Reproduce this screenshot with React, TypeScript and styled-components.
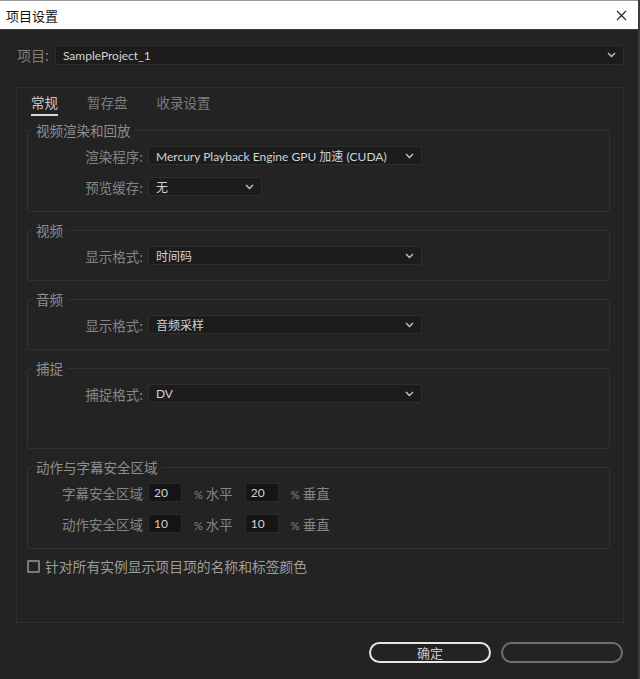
import styled, { createGlobalStyle } from 'styled-components';

const GlobalStyle = createGlobalStyle`
    html, body {
        margin: 0;
        padding: 0;
        background: #232323;
    }
    body {
        font-family: 'Noto Sans', 'Noto Sans CJK SC', sans-serif;
    }
`;

const CJK = `'Noto Sans CJK SC', 'Noto Sans', sans-serif`;
const LATIN = `Lato, 'Noto Sans CJK SC', sans-serif`;

interface Group {
    title: string;
    rows: { label: string; value: string; width: number }[];
    extraBottom?: number;
}

const groups: Group[] = [
    {
        title: '视频渲染和回放',
        rows: [
            { label: '渲染程序:', value: 'Mercury Playback Engine GPU 加速 (CUDA)', width: 274 },
            { label: '预览缓存:', value: '无', width: 114 },
        ],
    },
    { title: '视频', rows: [{ label: '显示格式:', value: '时间码', width: 274 }] },
    { title: '音频', rows: [{ label: '显示格式:', value: '音频采样', width: 274 }] },
    { title: '捕捉', rows: [{ label: '捕捉格式:', value: 'DV', width: 274 }], extraBottom: 30 },
];

const safeAreas = [
    { label: '字幕安全区域', h: '20', v: '20' },
    { label: '动作安全区域', h: '10', v: '10' },
];

const Chevron = () => (
    <svg width="9" height="6" viewBox="0 0 9 6">
        <polyline points="1,1 4.5,4.5 8,1" fill="none" stroke="#c4c4c4" strokeWidth="1.4" />
    </svg>
);

const Select = ({ value, width }: { value: string; width?: number }) => (
    <SelectBox style={width ? { width } : undefined}>
        <SelectText>{value}</SelectText>
        <Chevron />
    </SelectBox>
);

const App = () => {
    return (
        <>
            <GlobalStyle />
            <Window>
                <TitleBar>
                    <Title>项目设置</Title>
                    <svg width="11" height="11" viewBox="0 0 11 11">
                        <path d="M1 1 L10 10 M10 1 L1 10" stroke="#222" strokeWidth="1.1" />
                    </svg>
                </TitleBar>

                <Body>
                    <ProjectRow>
                        <ProjectLabel>项目:</ProjectLabel>
                        <ProjectSelect>
                            <SelectText>SampleProject_1</SelectText>
                            <Chevron />
                        </ProjectSelect>
                    </ProjectRow>

                    <Panel>
                        <Tabs>
                            <Tab $active>常规</Tab>
                            <Tab>暂存盘</Tab>
                            <Tab>收录设置</Tab>
                        </Tabs>

                        <Groups>
                            {groups.map((g) => (
                                <Fieldset key={g.title} $extraBottom={g.extraBottom}>
                                    <Legend>{g.title}</Legend>
                                    {g.rows.map((r) => (
                                        <Row key={r.label}>
                                            <RowLabel>{r.label}</RowLabel>
                                            <Select value={r.value} width={r.width} />
                                        </Row>
                                    ))}
                                </Fieldset>
                            ))}

                            <Fieldset>
                                <Legend>动作与字幕安全区域</Legend>
                                {safeAreas.map((s) => (
                                    <Row key={s.label}>
                                        <RowLabel>{s.label}</RowLabel>
                                        <NumberInput>{s.h}</NumberInput>
                                        <Unit>
                                            <Percent>%</Percent> 水平
                                        </Unit>
                                        <NumberInput>{s.v}</NumberInput>
                                        <Unit>
                                            <Percent>%</Percent> 垂直
                                        </Unit>
                                    </Row>
                                ))}
                            </Fieldset>
                        </Groups>

                        <CheckRow>
                            <CheckBox />
                            <CheckLabel>针对所有实例显示项目项的名称和标签颜色</CheckLabel>
                        </CheckRow>
                    </Panel>

                    <Footer>
                        <PillButton $primary>确定</PillButton>
                        <PillButton />
                    </Footer>
                </Body>
            </Window>
        </>
    );
};

export default App;

// STYLES

const Window = styled.div`
    width: 640px;
    height: 679px;
    box-sizing: border-box;
    display: flex;
    flex-direction: column;
    background: #232323;
    border-right: 2px solid #3a3a3a;
`;

const TitleBar = styled.header`
    height: 30px;
    box-sizing: border-box;
    flex-shrink: 0;
    background: #ffffff;
    border-top: 1px solid #9a9a9a;
    border-bottom: 1px solid #3a3a3a;
    display: flex;
    align-items: center;
    justify-content: space-between;
    padding: 0 11px 0 6px;
`;

const Title = styled.span`
    font-family: ${CJK};
    font-size: 13px;
    color: #111;
`;

const Body = styled.main`
    flex: 1;
    display: flex;
    flex-direction: column;
    padding: 15px 14px 0 16px;
`;

const ProjectRow = styled.div`
    display: flex;
    align-items: center;
    gap: 6px;
    height: 20px;
`;

const ProjectLabel = styled.span`
    font-family: ${CJK};
    font-size: 14px;
    color: #7e7e7e;
    padding-left: 1px;
`;

const SelectBox = styled.div`
    height: 19px;
    box-sizing: border-box;
    display: flex;
    align-items: center;
    justify-content: space-between;
    padding: 0 7px 0 7px;
    background: #1c1c1c;
    border: 1px solid #2e2e2e;
    border-radius: 2px;
`;

const ProjectSelect = styled(SelectBox)`
    flex: 1;
    height: 20px;
`;

const SelectText = styled.span`
    font-family: ${LATIN};
    font-size: 12px;
    color: #d2d2d2;
    white-space: nowrap;
`;

const Panel = styled.section`
    margin-top: 22px;
    height: 536px;
    box-sizing: border-box;
    border: 1px solid #2f2f2f;
    padding: 0 13px 0 10px;
    display: flex;
    flex-direction: column;
`;

const Tabs = styled.nav`
    display: flex;
    gap: 29px;
    padding: 5px 0 0 4px;
`;

const Tab = styled.span<{ $active?: boolean }>`
    font-family: ${CJK};
    font-size: 13.5px;
    line-height: 18px;
    padding-bottom: 3px;
    color: ${({ $active }) => ($active ? '#c8c8c8' : '#7c7c7c')};
    border-bottom: 2px solid ${({ $active }) => ($active ? '#d8d8d8' : 'transparent')};
`;

const Groups = styled.div`
    display: flex;
    flex-direction: column;
    gap: 9px;
    margin-top: 5px;
`;

const Fieldset = styled.fieldset<{ $extraBottom?: number }>`
    margin: 0;
    border: 1px solid #313131;
    border-radius: 2px;
    padding: 7px 0 ${({ $extraBottom }) => 15 + ($extraBottom || 0)}px 0;
    display: flex;
    flex-direction: column;
    gap: 12px;
`;

const Legend = styled.legend`
    font-family: ${CJK};
    font-size: 13.5px;
    line-height: 18px;
    color: #8e8e8e;
    padding: 0 4px;
    margin-left: 4px;
`;

const Row = styled.div`
    display: flex;
    align-items: center;
    height: 19px;
`;

const RowLabel = styled.span`
    width: 115px;
    margin-right: 5px;
    text-align: right;
    font-family: ${CJK};
    font-size: 13.5px;
    color: #858585;
    white-space: nowrap;
`;

const NumberInput = styled.span`
    width: 34px;
    height: 19px;
    box-sizing: border-box;
    display: flex;
    align-items: center;
    padding-left: 5px;
    background: #151515;
    border: 1px solid #2a2a2a;
    font-family: ${LATIN};
    font-size: 12px;
    color: #d2d2d2;
`;

const Unit = styled.span`
    font-family: ${CJK};
    font-size: 13.5px;
    color: #858585;
    margin: 0 12px 0 12px;
`;

const Percent = styled.span`
    font-family: ${LATIN};
    font-size: 11px;
`;

const CheckRow = styled.label`
    display: flex;
    align-items: center;
    gap: 5px;
    margin-top: 7px;
`;

const CheckBox = styled.span`
    width: 13px;
    height: 13px;
    box-sizing: border-box;
    border: 2px solid #7a7a7a;
    border-radius: 1px;
`;

const CheckLabel = styled.span`
    font-family: ${CJK};
    font-size: 13.8px;
    color: #9c9c9c;
`;

const Footer = styled.footer`
    display: flex;
    justify-content: flex-end;
    gap: 10px;
    margin-top: 19px;
    padding-right: 1px;
`;

const PillButton = styled.button<{ $primary?: boolean }>`
    width: 122px;
    height: 21px;
    box-sizing: border-box;
    border-radius: 11px;
    background: transparent;
    border: 2px solid ${({ $primary }) => ($primary ? '#e6e6e6' : '#6e6e6e')};
    font-family: ${CJK};
    font-size: 13px;
    color: #c8c8c8;
    padding: 0;
    line-height: 17px;
`;
